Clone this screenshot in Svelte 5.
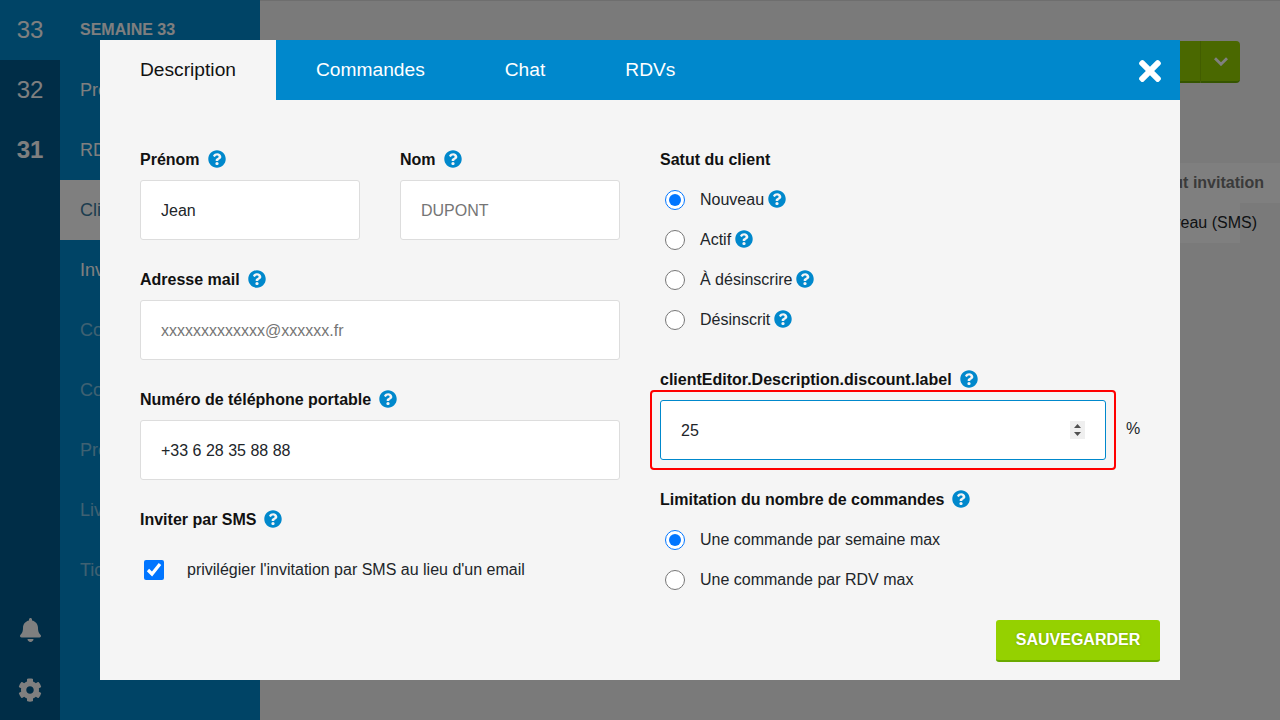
<script>
  const weeks = [
    { n: 33, cls: "current" },
    { n: 32, cls: "" },
    { n: 31, cls: "bold" }
  ];
  const navItems = [
    { label: "Produits" },
    { label: "RDVs" },
    { label: "Clients", active: true },
    { label: "Invités" },
    { label: "Commandes", dim: true },
    { label: "Coupons", dim: true },
    { label: "Présentation", dim: true },
    { label: "Livraison", dim: true },
    { label: "Tickets", dim: true }
  ];
  const tabs = ["Description", "Commandes", "Chat", "RDVs"];
  const statuses = ["Nouveau", "Actif", "À désinscrire", "Désinscrit"];
  const limits = ["Une commande par semaine max", "Une commande par RDV max"];

  const helpPath = "M504 256c0 136.997-111.043 248-248 248S8 392.997 8 256C8 119.083 119.043 8 256 8s248 111.083 248 248zM262.655 90c-54.497 0-89.255 22.957-116.549 63.758-3.536 5.286-2.353 12.415 2.715 16.258l34.699 26.31c5.205 3.947 12.621 3.008 16.665-2.122 17.864-22.658 30.113-35.797 57.303-35.797 20.429 0 45.698 13.148 45.698 32.958 0 14.976-12.363 22.667-32.534 33.976C247.128 238.528 216 254.941 216 296v4c0 6.627 5.373 12 12 12h56c6.627 0 12-5.373 12-12v-1.333c0-28.462 83.186-29.647 83.186-106.667 0-58.002-60.165-102-116.531-102zM256 338c-25.365 0-46 20.635-46 46 0 25.364 20.635 46 46 46s46-20.636 46-46c0-25.365-20.635-46-46-46z";
</script>

{#snippet help()}
  <svg class="help" viewBox="0 0 512 512" aria-hidden="true"><path d={helpPath} /></svg>
{/snippet}

<div class="page">
  <aside class="weeks">
    {#each weeks as w}
      <div class="week {w.cls}">{w.n}</div>
    {/each}
    <div class="spacer"></div>
    <div class="week">
      <svg class="side-icon" viewBox="0 0 448 512" aria-hidden="true"><path d="M224 512c35.32 0 63.97-28.65 63.97-64H160.03c0 35.35 28.65 64 63.97 64zm215.39-149.71c-19.32-20.76-55.47-51.99-55.47-154.29 0-77.7-54.48-139.9-127.94-155.16V32c0-17.67-14.32-32-31.98-32s-31.98 14.33-31.98 32v20.84C118.56 68.1 64.08 130.3 64.08 208c0 102.3-36.15 133.53-55.47 154.29-6 6.45-8.66 14.16-8.61 21.71.11 16.4 12.98 32 32.1 32h383.8c19.12 0 32-15.6 32.1-32 .05-7.55-2.61-15.27-8.61-21.71z" /></svg>
    </div>
    <div class="week">
      <svg class="side-icon" viewBox="0 0 512 512" aria-hidden="true"><path d="M487.4 315.7l-42.6-24.6c4.3-23.2 4.3-47 0-70.2l42.6-24.6c4.9-2.8 7.1-8.6 5.5-14-11.1-35.6-30-67.8-54.7-94.6-3.8-4.1-10-5.1-14.8-2.3L380.8 110c-17.9-15.4-38.5-27.3-60.8-35.1V25.8c0-5.6-3.9-10.5-9.4-11.7-36.7-8.2-74.3-7.8-109.2 0-5.5 1.2-9.4 6.1-9.4 11.7V75c-22.2 7.9-42.8 19.8-60.8 35.1L88.7 85.5c-4.9-2.8-11-1.9-14.8 2.3-24.7 26.7-43.6 58.9-54.7 94.6-1.7 5.4.6 11.2 5.5 14L67.3 221c-4.3 23.2-4.3 47 0 70.2l-42.6 24.6c-4.9 2.8-7.1 8.6-5.5 14 11.1 35.6 30 67.8 54.7 94.6 3.8 4.1 10 5.1 14.8 2.3l42.6-24.6c17.9 15.4 38.5 27.3 60.8 35.1v49.2c0 5.6 3.9 10.5 9.4 11.7 36.7 8.2 74.3 7.8 109.2 0 5.5-1.2 9.4-6.1 9.4-11.7v-49.2c22.2-7.9 42.8-19.8 60.8-35.1l42.6 24.6c4.9 2.8 11 1.9 14.8-2.3 24.7-26.7 43.6-58.9 54.7-94.6 1.5-5.5-.7-11.3-5.6-14.1zM256 336c-44.1 0-80-35.9-80-80s35.9-80 80-80 80 35.9 80 80-35.9 80-80 80z" /></svg>
    </div>
  </aside>

  <nav class="nav">
    <div class="nav-title">SEMAINE 33</div>
    {#each navItems as item}
      <div class="nav-item" class:active={item.active} class:dim={item.dim}>{item.label}</div>
    {/each}
  </nav>

  <main class="main">
    <div class="actions">
      <button class="split-main">Ajouter</button>
      <button class="split-caret" aria-label="Plus">
        <svg viewBox="0 0 14 9" width="14" height="9" aria-hidden="true"><path d="M1 1.2l6 6 6-6" fill="none" stroke="currentColor" stroke-width="2.8" /></svg>
      </button>
    </div>
    <div class="table-head">Statut invitation</div>
    <div class="table-row"><span>Nouveau (SMS)</span></div>
  </main>
</div>

<div class="overlay">
  <div class="modal">
    <header class="tabs">
      {#each tabs as tab, i}
        <div class="tab" class:selected={i === 0}>{tab}</div>
      {/each}
      <button class="close" aria-label="Fermer">
        <svg viewBox="0 0 352 512" aria-hidden="true"><path d="M242.72 256l100.07-100.07c12.28-12.28 12.28-32.19 0-44.48l-22.24-22.24c-12.28-12.28-32.19-12.28-44.48 0L176 189.28 75.93 89.21c-12.28-12.28-32.19-12.28-44.48 0L9.21 111.45c-12.28 12.28-12.28 32.19 0 44.48L109.28 256 9.21 356.07c-12.28 12.28-12.28 32.19 0 44.48l22.24 22.24c12.28 12.28 32.2 12.28 44.48 0L176 322.72l100.07 100.07c12.28 12.28 32.2 12.28 44.48 0l22.24-22.24c12.28-12.28 12.28-32.19 0-44.48L242.72 256z" /></svg>
      </button>
    </header>

    <div class="body">
      <section class="col">
        <div class="pair">
          <div class="field">
            <div class="label">Prénom {@render help()}</div>
            <input class="input" type="text" value="Jean" />
          </div>
          <div class="field">
            <div class="label">Nom {@render help()}</div>
            <input class="input" type="text" placeholder="DUPONT" />
          </div>
        </div>
        <div class="field">
          <div class="label">Adresse mail {@render help()}</div>
          <input class="input" type="text" placeholder="xxxxxxxxxxxxx@xxxxxx.fr" />
        </div>
        <div class="field">
          <div class="label">Numéro de téléphone portable {@render help()}</div>
          <input class="input" type="text" value="+33 6 28 35 88 88" />
        </div>
        <div class="field">
          <div class="label">Inviter par SMS {@render help()}</div>
          <label class="check">
            <input type="checkbox" checked />
            <span>privilégier l'invitation par SMS au lieu d'un email</span>
          </label>
        </div>
      </section>

      <section class="col">
        <div class="label">Satut du client</div>
        <div class="radios status">
          {#each statuses as s, i}
            <label class="radio">
              <input type="radio" name="status" checked={i === 0} />
              <span class="radio-text">{s} {@render help()}</span>
            </label>
          {/each}
        </div>
        <div class="label discount-label">clientEditor.Description.discount.label {@render help()}</div>
        <div class="discount">
          <div class="discount-box">
            <input class="input number" type="number" value="25" />
            <span class="spin" aria-hidden="true">
              <svg viewBox="0 0 15 18" width="15" height="18"><path d="M7.5 3l3.5 4H4zM4 11h7l-3.5 4z" /></svg>
            </span>
          </div>
          <span class="unit">%</span>
        </div>
        <div class="label limit-label">Limitation du nombre de commandes {@render help()}</div>
        <div class="radios limits">
          {#each limits as l, i}
            <label class="radio">
              <input type="radio" name="limit" checked={i === 0} />
              <span class="radio-text">{l}</span>
            </label>
          {/each}
        </div>
      </section>
    </div>

    <footer class="footer">
      <button class="save">SAUVEGARDER</button>
    </footer>
  </div>
</div>

<style>
  :global(body) {
    margin: 0;
    font-family: "Liberation Sans", Arial, sans-serif;
    font-size: 16px;
    color: #212529;
  }

  .page {
    display: flex;
    height: 720px;
    overflow: hidden;
    background: #f5f5f5;
  }

  .weeks {
    width: 60px;
    flex: none;
    display: flex;
    flex-direction: column;
    background: #005a8e;
  }

  .week {
    height: 60px;
    flex: none;
    display: flex;
    align-items: center;
    justify-content: center;
    font-size: 24px;
    color: #fff;
  }

  .week.current {
    background: #0088cc;
  }

  .week.bold {
    font-weight: bold;
  }

  .spacer {
    flex: 1;
  }

  .side-icon {
    height: 24px;
    fill: #fff;
  }

  .nav {
    width: 200px;
    flex: none;
    background: #0088cc;
    color: #fff;
  }

  .nav-title {
    height: 60px;
    line-height: 60px;
    padding-left: 20px;
    font-weight: bold;
  }

  .nav-item {
    height: 60px;
    line-height: 60px;
    padding-left: 20px;
    font-size: 18px;
  }

  .nav-item.active {
    background: #fff;
    color: #3a7a9e;
  }

  .nav-item.dim {
    color: rgba(255, 255, 255, 0.5);
  }

  .main {
    flex: 1;
    min-width: 0;
    border-top: 1px solid #ddd;
  }

  .actions {
    display: flex;
    justify-content: flex-end;
    margin: 40px 40px 0 0;
  }

  .actions button {
    height: 42px;
    border: 0;
    border-bottom: 2px solid #6aaa00;
    background: #95d100;
    color: #fff;
  }

  .split-main {
    width: 160px;
    border-radius: 4px 0 0 4px;
  }

  .actions .split-caret {
    width: 40px;
    padding: 0;
    border-left: 1px solid #84ba00;
    border-radius: 0 4px 4px 0;
  }

  .split-caret svg {
    display: block;
    margin-left: 13px;
  }

  .table-head {
    margin-top: 80px;
    height: 40px;
    line-height: 40px;
    text-align: right;
    padding-right: 16px;
    font-weight: bold;
    color: #757575;
    background: #fff;
  }

  .table-row {
    height: 40px;
    line-height: 40px;
    margin-right: 40px;
    background: #fff;
    display: flex;
    justify-content: flex-end;
    white-space: nowrap;
  }

  .table-row span {
    margin-right: -17px;
    color: #212529;
  }

  .overlay {
    position: fixed;
    inset: 0;
    background: rgba(0, 0, 0, 0.5);
    padding: 40px 100px;
    box-sizing: border-box;
  }

  .modal {
    height: 640px;
    background: #f5f5f5;
    display: flex;
    flex-direction: column;
  }

  .tabs {
    height: 60px;
    flex: none;
    display: flex;
    background: #0088cc;
    position: relative;
  }

  .tab {
    padding: 0 40px;
    line-height: 60px;
    font-size: 19.2px;
    color: #fff;
  }

  .tab.selected {
    background: #f5f5f5;
    color: #111;
  }

  .close {
    position: absolute;
    right: 19px;
    top: 15px;
    width: 22px;
    height: 32px;
    padding: 0;
    border: 0;
    background: none;
  }

  .close svg {
    display: block;
    width: 22px;
    height: 32px;
    fill: #fff;
  }

  .body {
    flex: 1;
    display: grid;
    grid-template-columns: 480px 480px;
    column-gap: 40px;
    padding: 50px 40px 0;
  }

  .col {
    display: flex;
    flex-direction: column;
    min-width: 0;
  }

  .pair {
    display: grid;
    grid-template-columns: 220px 220px;
    column-gap: 40px;
  }

  .field {
    margin-bottom: 30px;
  }

  .col > .field:last-child {
    margin-bottom: 0;
  }

  .label {
    height: 20px;
    line-height: 20px;
    margin-bottom: 10px;
    display: flex;
    align-items: center;
    gap: 8px;
    font-weight: bold;
    color: #111;
    white-space: nowrap;
  }

  .help {
    width: 18px;
    height: 18px;
    margin-top: -2px;
    flex: none;
    fill: #0088cc;
  }

  .input {
    display: block;
    width: 100%;
    height: 60px;
    box-sizing: border-box;
    padding: 2px 20px 0;
    border: 1px solid #ddd;
    border-radius: 3px;
    background: #fff;
    font: inherit;
    color: #212529;
    outline: none;
  }

  .input::placeholder {
    color: #757575;
  }

  .check {
    display: flex;
    align-items: center;
    height: 60px;
  }

  .check input {
    width: 20px;
    height: 20px;
    margin: 0 23px 0 4px;
    flex: none;
  }

  .radios {
    display: flex;
    flex-direction: column;
  }

  .radio {
    height: 40px;
    display: flex;
    align-items: center;
  }

  .radio input {
    width: 20px;
    height: 20px;
    margin: 0 15px 0 5px;
    flex: none;
  }

  .radio-text {
    display: flex;
    align-items: center;
    gap: 4px;
  }

  .discount-label {
    margin-top: 30px;
    margin-bottom: 10px;
  }

  .discount {
    display: flex;
    align-items: center;
    gap: 10px;
  }

  .discount-box {
    position: relative;
    width: 446px;
    flex: none;
    margin: -10px 0 -10px -10px;
    padding: 8px;
    border: 2px solid #f00;
    border-radius: 4px;
  }

  .number {
    border-color: #0088cc;
    -moz-appearance: textfield;
  }

  .number::-webkit-inner-spin-button,
  .number::-webkit-outer-spin-button {
    -webkit-appearance: none;
    margin: 0;
  }

  .spin {
    position: absolute;
    top: 29px;
    right: 29px;
    width: 15px;
    height: 18px;
    background: #efefef;
  }

  .spin svg {
    display: block;
    fill: #505050;
  }

  .unit {
    margin-top: -2px;
  }

  .limit-label {
    margin-top: 30px;
    margin-bottom: 10px;
  }

  .footer {
    display: flex;
    justify-content: flex-end;
    padding: 0 20px 18px;
  }

  .save {
    width: 164px;
    height: 42px;
    border: 0;
    border-bottom: 2px solid #6aaa00;
    border-radius: 3px;
    background: #95d100;
    color: #fff;
    font-family: inherit;
    font-size: 16px;
    font-weight: bold;
    text-shadow: 0 0 3px rgba(0, 0, 0, 0.2);
  }
</style>
